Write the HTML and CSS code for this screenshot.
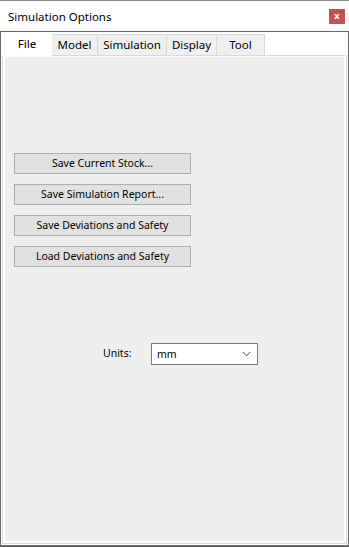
FILE: index.html
```html
<!DOCTYPE html>
<html>
<head>
<meta charset="utf-8">
<link rel="stylesheet" href="styles.css">
</head>
<body>
<div class="window">
  <div class="titlebar">
    <span class="title">Simulation Options</span>
    <span class="close">x</span>
  </div>
  <div class="frame">
    <div class="tabstrip">
      <div class="tab active">File</div>
      <div class="tab t-model">Model</div>
      <div class="tab t-sim">Simulation</div>
      <div class="tab t-disp">Display</div>
      <div class="tab t-tool">Tool</div>
    </div>
    <div class="panel">
      <div class="inner">
        <div class="buttons">
          <div class="btn">Save Current Stock...</div>
          <div class="btn">Save Simulation Report...</div>
          <div class="btn">Save Deviations and Safety</div>
          <div class="btn">Load Deviations and Safety</div>
        </div>
        <div class="units">
          <span class="label">Units:</span>
          <div class="select">
            <span>mm</span>
            <svg class="chev" width="9" height="6" viewBox="0 0 9 6"><path d="M0.5 0.8 L4.5 4.8 L8.5 0.8" fill="none" stroke="#444" stroke-width="1"/></svg>
          </div>
        </div>
      </div>
    </div>
  </div>
</div>
</body>
</html>
```

FILE: styles.css
```css
* { box-sizing: border-box; }
html, body { margin: 0; padding: 0; }
body {
  width: 349px;
  height: 547px;
  background: #ffffff;
  font-family: "Noto Sans", "Open Sans", sans-serif;
  font-size: 11px;
  color: #000;
  overflow: hidden;
}
.window {
  width: 349px;
  height: 547px;
  display: flex;
  flex-direction: column;
}
.titlebar {
  height: 31px;
  border-top: 1px solid #8c8c8c;
  background: #fff;
  display: flex;
  align-items: center;
  justify-content: space-between;
  padding: 0 4px 0 8px;
}
.title {
  font-size: 11.5px;
  color: #000;
}
.close {
  width: 16px;
  height: 15px;
  background: #c75050;
  color: #fff;
  font-weight: bold;
  font-size: 9px;
  line-height: 14px;
  text-align: center;
  font-family: "DejaVu Sans", sans-serif;
}
.frame {
  flex: 1;
  border: 1px solid #676767;
  border-bottom-width: 2px;
  padding: 0 1px 1px 1px;
  background: #fff;
  display: flex;
  flex-direction: column;
}
.tabstrip {
  height: 23px;
  display: flex;
  align-items: flex-end;
  position: relative;
  z-index: 1;
}
.tab {
  height: 21px;
  border: 1px solid #d9d9d9;
  border-bottom: none;
  border-left: none;
  background: #f0f0f0;
  display: flex;
  align-items: center;
  justify-content: center;
  font-size: 11.5px;
  padding-bottom: 1px;
}
.tab.active {
  width: 50px;
  height: 24px;
  margin-bottom: -1px;
  background: #fff;
  border: none;
  padding-bottom: 2px;
}
.t-model { width: 46px; }
.t-sim { width: 69px; }
.t-disp { width: 50px; }
.t-tool { width: 48px; }
.panel {
  flex: 1;
  border: 1px solid #d9d9d9;
  padding: 1px 2px 2px 2px;
  background: #fff;
  display: flex;
}
.inner {
  flex: 1;
  background: #efefef;
  padding: 96px 0 0 9px;
}
.buttons {
  display: flex;
  flex-direction: column;
  gap: 10px;
}
.btn {
  width: 177px;
  height: 21px;
  border: 1px solid #adadad;
  background: #e1e1e1;
  display: flex;
  align-items: center;
  justify-content: center;
  font-size: 10.5px;
  padding-bottom: 1px;
}
.units {
  margin-top: 76px;
  display: flex;
  align-items: center;
  padding-left: 89px;
}
.label {
  font-size: 10.5px;
  width: 48px;
  padding-bottom: 3px;
}
.select {
  width: 107px;
  height: 22px;
  border: 1px solid #7a7a7a;
  background: #fff;
  display: flex;
  align-items: center;
  justify-content: space-between;
  padding: 0 6px 0 5px;
  font-size: 10.5px;
}
.select span { padding-bottom: 1px; }
.chev { display: block; }
```
